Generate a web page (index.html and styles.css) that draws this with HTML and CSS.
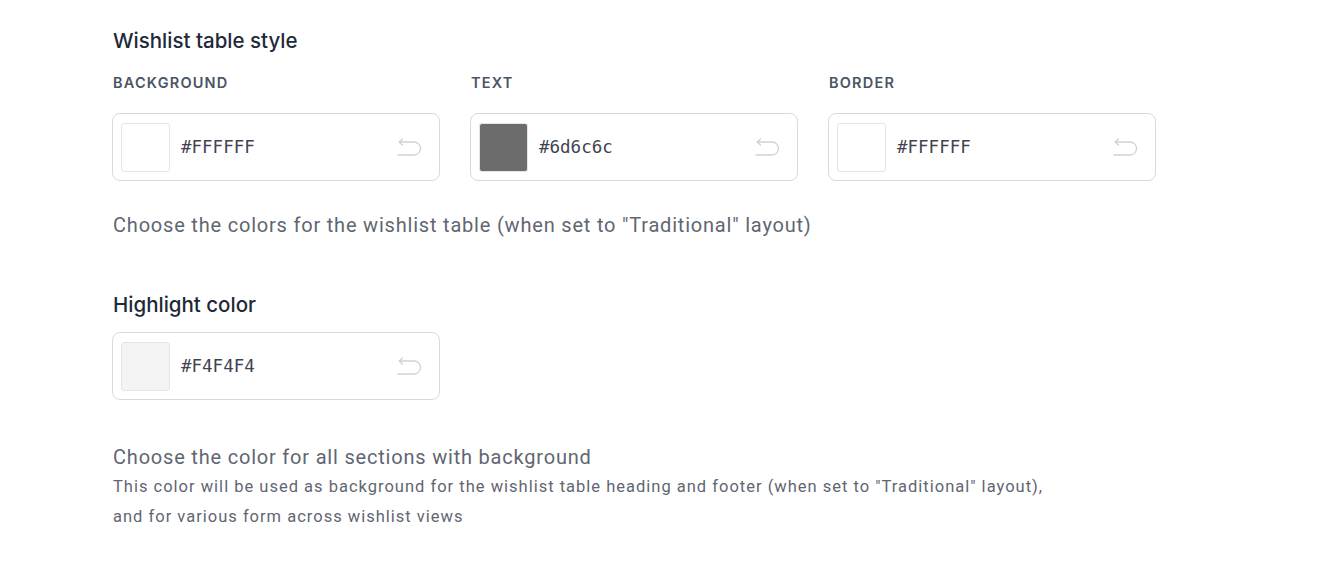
FILE: index.html
```html
<!DOCTYPE html>
<html lang="en">
  <head>
    <meta charset="UTF-8" />
    <meta name="viewport" content="width=device-width, initial-scale=1.0" />
    <title>Wishlist colors</title>
    <link rel="stylesheet" href="styles.css">
  </head>
  <body>
    <div class="settings">
      <section class="field">
        <h3 class="field-title">Wishlist table style</h3>
        <div class="color-row">
          <div class="color-col">
            <p class="color-label">Background</p>
            <div class="color-input">
              <span class="swatch" style="background: #FFFFFF"></span>
              <span class="hex">#FFFFFF</span>
              <svg class="reset" viewBox="0 0 28 20" fill="none" stroke="currentColor" stroke-width="1.3" stroke-linecap="round" stroke-linejoin="round"><path d="M5 5 L8.5 2 M5 5 L8.5 8 M5 5 H20 A6.5 6.5 0 0 1 20 18 H4"/></svg>
            </div>
          </div>
          <div class="color-col">
            <p class="color-label">Text</p>
            <div class="color-input">
              <span class="swatch" style="background: #6d6c6c"></span>
              <span class="hex">#6d6c6c</span>
              <svg class="reset" viewBox="0 0 28 20" fill="none" stroke="currentColor" stroke-width="1.3" stroke-linecap="round" stroke-linejoin="round"><path d="M5 5 L8.5 2 M5 5 L8.5 8 M5 5 H20 A6.5 6.5 0 0 1 20 18 H4"/></svg>
            </div>
          </div>
          <div class="color-col">
            <p class="color-label">Border</p>
            <div class="color-input">
              <span class="swatch" style="background: #FFFFFF"></span>
              <span class="hex">#FFFFFF</span>
              <svg class="reset" viewBox="0 0 28 20" fill="none" stroke="currentColor" stroke-width="1.3" stroke-linecap="round" stroke-linejoin="round"><path d="M5 5 L8.5 2 M5 5 L8.5 8 M5 5 H20 A6.5 6.5 0 0 1 20 18 H4"/></svg>
            </div>
          </div>
        </div>
        <p class="field-desc">Choose the colors for the wishlist table (when set to "Traditional" layout)</p>
      </section>

      <section class="field">
        <h3 class="field-title">Highlight color</h3>
        <div class="color-row">
          <div class="color-col">
            <div class="color-input">
              <span class="swatch" style="background: #F4F4F4"></span>
              <span class="hex">#F4F4F4</span>
              <svg class="reset" viewBox="0 0 28 20" fill="none" stroke="currentColor" stroke-width="1.3" stroke-linecap="round" stroke-linejoin="round"><path d="M5 5 L8.5 2 M5 5 L8.5 8 M5 5 H20 A6.5 6.5 0 0 1 20 18 H4"/></svg>
            </div>
          </div>
        </div>
        <p class="field-desc field-desc-lg">Choose the color for all sections with background</p>
        <p class="field-help">This color will be used as background for the wishlist table heading and footer (when set to "Traditional" layout),<br>and for various form across wishlist views</p>
      </section>
    </div>
  </body>
</html>
```

FILE: styles.css
```css
:root {
  --heading: #1f2937;
  --label: #4b5563;
  --muted: #5f6672;
  --border: #d6d9de;
  --icon: #cfd2d6;
}

body {
  margin: 0;
  background: #fff;
  font-family: Inter, "Noto Sans", sans-serif;
  color: var(--heading);
}

.settings {
  padding: 28px 0 0 113px;
}

.field {
  margin-bottom: 53px;
}

.field-title {
  margin: 0 0 14px;
  font-size: 20.5px;
  font-weight: 500;
  line-height: 26px;
}

.color-row {
  display: flex;
  gap: 30px;
}

.color-col {
  width: 328px;
}

.color-label {
  margin: 6px 0 21px;
  font-size: 14.5px;
  font-weight: 600;
  letter-spacing: 1.2px;
  text-transform: uppercase;
  color: var(--label);
  line-height: 18px;
}

.color-input {
  display: flex;
  align-items: center;
  width: 328px;
  height: 68px;
  margin-left: -1px;
  padding: 0 17px 0 8px;
  border: 1px solid var(--border);
  border-radius: 8px;
  box-sizing: border-box;
}

.swatch {
  width: 49px;
  height: 49px;
  border: 1px solid #e3e5e8;
  border-radius: 3px;
  box-sizing: border-box;
}

.hex {
  flex: 1;
  margin-left: 11px;
  font-family: "DejaVu Sans Mono", monospace;
  font-size: 17.5px;
  color: #3f4550;
}

.reset {
  width: 28px;
  height: 20px;
  color: var(--icon);
}

.field-desc {
  margin: 30px 0 0;
  font-family: Roboto, sans-serif;
  font-size: 20px;
  letter-spacing: 0.8px;
  line-height: 28px;
  color: var(--muted);
}

.field-desc-lg {
  margin-top: 43px;
}

.field-help {
  margin: 1px 0 0;
  font-family: Roboto, sans-serif;
  font-size: 16.5px;
  letter-spacing: 1px;
  line-height: 30px;
  color: var(--muted);
}
```
